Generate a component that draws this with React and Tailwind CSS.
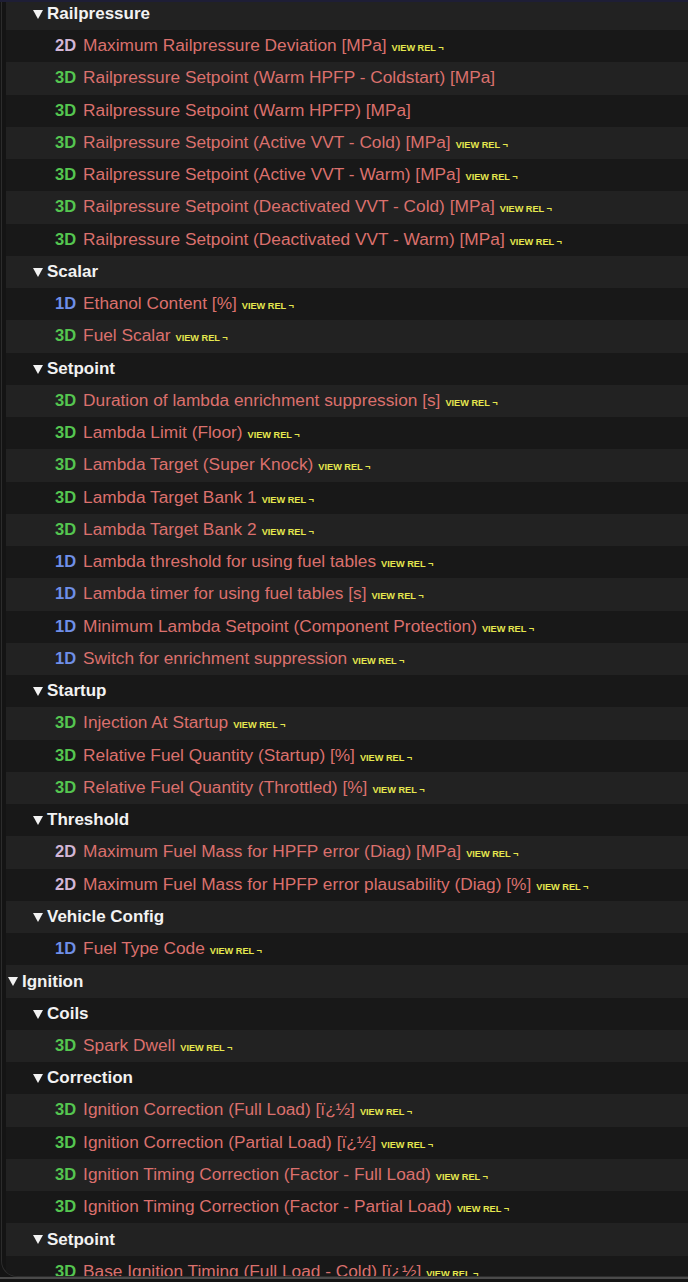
import React from "react";

const VR = true;

// fuel subgroups (parent group header is scrolled out of view above)
const tree = [
  {
    title: "Railpressure",
    level: 1,
    items: [
      ["2D", "Maximum Railpressure Deviation [MPa]", VR],
      ["3D", "Railpressure Setpoint (Warm HPFP - Coldstart) [MPa]", false],
      ["3D", "Railpressure Setpoint (Warm HPFP) [MPa]", false],
      ["3D", "Railpressure Setpoint (Active VVT - Cold) [MPa]", VR],
      ["3D", "Railpressure Setpoint (Active VVT - Warm) [MPa]", VR],
      ["3D", "Railpressure Setpoint (Deactivated VVT - Cold) [MPa]", VR],
      ["3D", "Railpressure Setpoint (Deactivated VVT - Warm) [MPa]", VR],
    ],
  },
  {
    title: "Scalar",
    level: 1,
    items: [
      ["1D", "Ethanol Content [%]", VR],
      ["3D", "Fuel Scalar", VR],
    ],
  },
  {
    title: "Setpoint",
    level: 1,
    items: [
      ["3D", "Duration of lambda enrichment suppression [s]", VR],
      ["3D", "Lambda Limit (Floor)", VR],
      ["3D", "Lambda Target (Super Knock)", VR],
      ["3D", "Lambda Target Bank 1", VR],
      ["3D", "Lambda Target Bank 2", VR],
      ["1D", "Lambda threshold for using fuel tables", VR],
      ["1D", "Lambda timer for using fuel tables [s]", VR],
      ["1D", "Minimum Lambda Setpoint (Component Protection)", VR],
      ["1D", "Switch for enrichment suppression", VR],
    ],
  },
  {
    title: "Startup",
    level: 1,
    items: [
      ["3D", "Injection At Startup", VR],
      ["3D", "Relative Fuel Quantity (Startup) [%]", VR],
      ["3D", "Relative Fuel Quantity (Throttled) [%]", VR],
    ],
  },
  {
    title: "Threshold",
    level: 1,
    items: [
      ["2D", "Maximum Fuel Mass for HPFP error (Diag) [MPa]", VR],
      ["2D", "Maximum Fuel Mass for HPFP error plausability (Diag) [%]", VR],
    ],
  },
  {
    title: "Vehicle Config",
    level: 1,
    items: [["1D", "Fuel Type Code", VR]],
  },
  { title: "Ignition", level: 0, items: [] },
  {
    title: "Coils",
    level: 1,
    items: [["3D", "Spark Dwell", VR]],
  },
  {
    title: "Correction",
    level: 1,
    items: [
      ["3D", "Ignition Correction (Full Load) [ï¿½]", VR],
      ["3D", "Ignition Correction (Partial Load) [ï¿½]", VR],
      ["3D", "Ignition Timing Correction (Factor - Full Load)", VR],
      ["3D", "Ignition Timing Correction (Factor - Partial Load)", VR],
    ],
  },
  {
    title: "Setpoint",
    level: 1,
    items: [["3D", "Base Ignition Timing (Full Load - Cold) [ï¿½]", VR]],
  },
];

const dimColor = {
  "1D": "text-[#6f8fe8]",
  "2D": "text-[#d2b6d6]",
  "3D": "text-[#55c650]",
};

function Caret() {
  return (
    <svg width="10" height="10" viewBox="0 0 10 10" className="shrink-0">
      <polygon points="0,1 10,1 5,10" fill="#f2f2f2" />
    </svg>
  );
}

function GroupRow({ title, level, striped }) {
  return (
    <div
      className={`flex items-center gap-[4px] h-[32.25px] ${
        striped ? "bg-[#222222]" : "bg-[#181818]"
      } ${level === 0 ? "pl-[2px]" : "pl-[27px]"}`}
    >
      <Caret />
      <span className="text-[17px] font-bold text-[#f2f2f2]">{title}</span>
    </div>
  );
}

function ItemRow({ dim, name, rel, striped }) {
  return (
    <div
      className={`flex items-center h-[32.25px] pl-[49px] ${
        striped ? "bg-[#222222]" : "bg-[#181818]"
      }`}
    >
      <div className="flex items-baseline gap-[7px] whitespace-nowrap">
        <span className={`text-[16.5px] font-bold ${dimColor[dim]}`}>{dim}</span>
        <span className="text-[17.3px] text-[#db706d]">{name}</span>
        {rel && (
          <span className="-ml-[2px] text-[9.2px] font-bold text-[#e6e84f]">VIEW REL ¬</span>
        )}
      </div>
    </div>
  );
}

export default function App() {
  const rows = [];
  tree.forEach((group) => {
    rows.push({ type: "group", ...group });
    group.items.forEach(([dim, name, rel]) => rows.push({ type: "item", dim, name, rel }));
  });

  return (
    <div className="relative h-[1282px] overflow-hidden bg-[#141414] font-['Liberation_Sans',Arial,sans-serif]">
      <div className="absolute top-0 inset-x-0 h-[2px] bg-[#1e1e36] z-10" />
      <div className="h-[1277px] overflow-hidden ml-[1px] pl-[4px] border-l border-b border-[#2c2c2c] rounded-bl-[16px]">
        <div className="-mt-[2.25px]">
          {rows.map((row, i) =>
            row.type === "group" ? (
              <GroupRow key={i} title={row.title} level={row.level} striped={i % 2 === 0} />
            ) : (
              <ItemRow key={i} dim={row.dim} name={row.name} rel={row.rel} striped={i % 2 === 0} />
            )
          )}
        </div>
      </div>
      <div className="h-[2px] bg-[#4a4a4a]" />
    </div>
  );
}
